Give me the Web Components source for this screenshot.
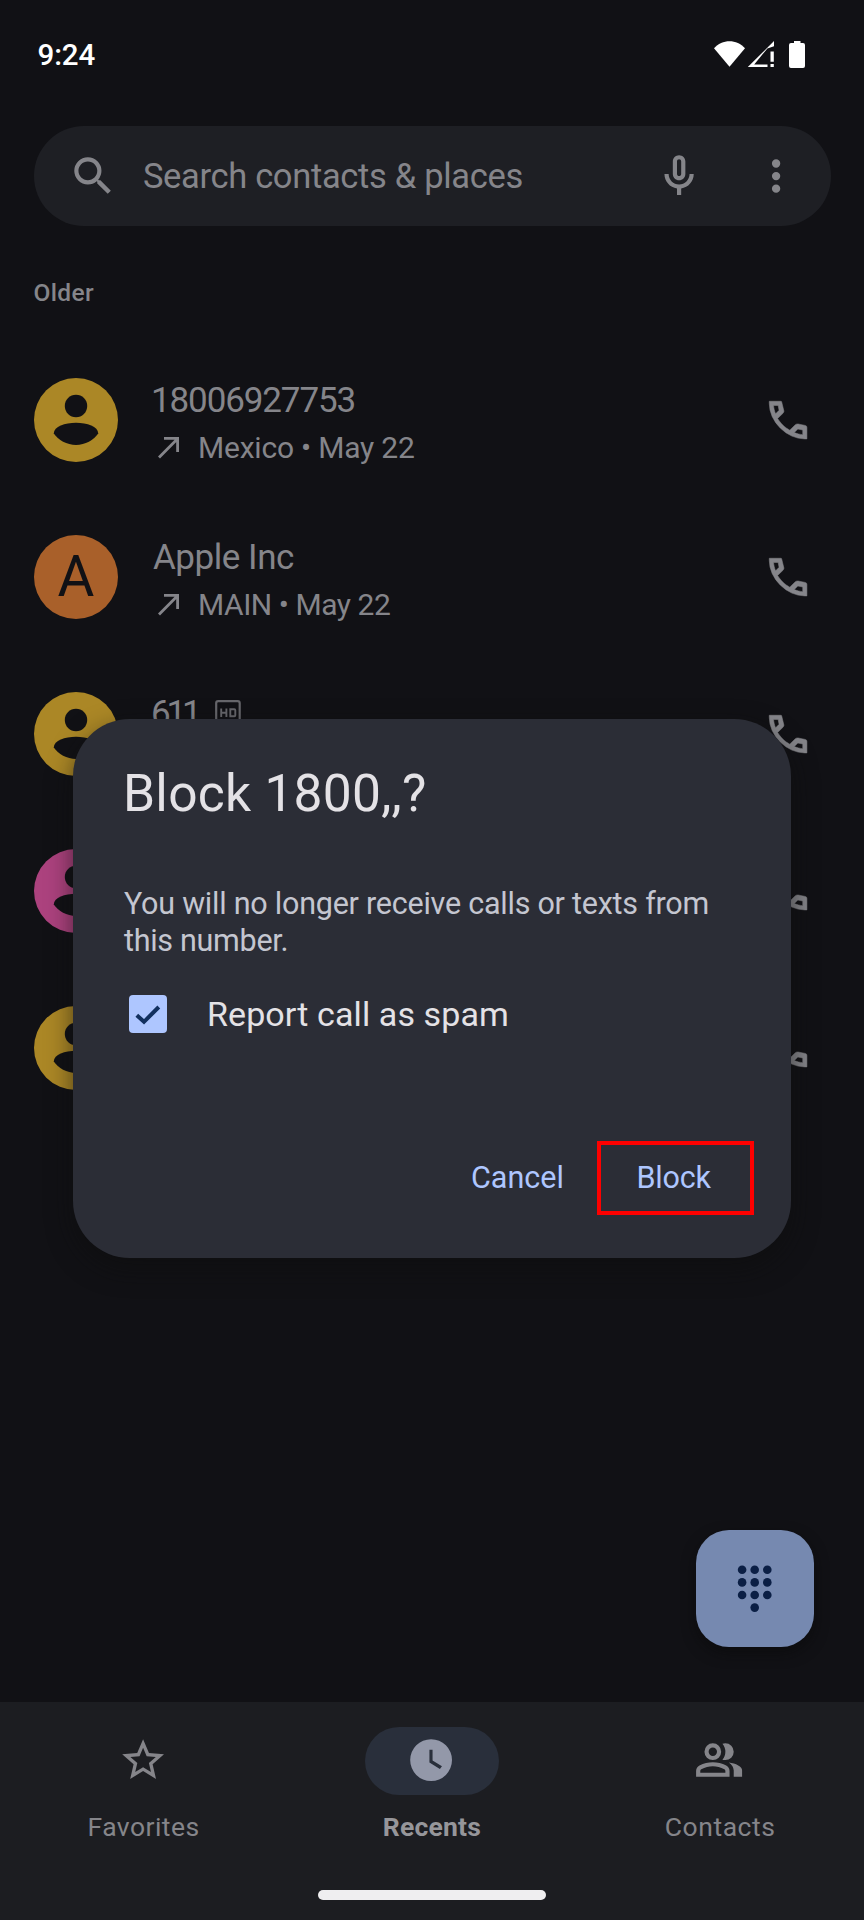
<!DOCTYPE html>
<html lang="en">
<head>
<meta charset="utf-8">
<title>Phone</title>
<style>
  html, body { margin: 0; background: #111115; }
  body { width: 864px; height: 1920px; overflow: hidden; font-family: Roboto, "Liberation Sans", sans-serif; }
</style>
</head>
<body>
<phone-screen></phone-screen>
<script>
const define = (name, html, setup) => {
  const tpl = document.createElement('template');
  tpl.innerHTML = html.trim();
  customElements.define(name, class extends HTMLElement {
    connectedCallback() {
      if (this.shadowRoot) return;
      this.attachShadow({ mode: 'open' }).appendChild(tpl.content.cloneNode(true));
      if (setup) setup.call(this, this.shadowRoot);
    }
  });
};

const ICONS = {
  search: 'M15.5 14h-.79l-.28-.27A6.47 6.47 0 0 0 16 9.5 6.5 6.5 0 1 0 9.5 16c1.61 0 3.09-.59 4.23-1.57l.27.28v.79l5 4.99L20.49 19l-4.99-5zm-6 0C7.01 14 5 11.99 5 9.5S7.01 5 9.5 5 14 7.01 14 9.5 11.99 14 9.5 14z',
  mic: 'M12 14c1.66 0 3-1.34 3-3V5c0-1.66-1.34-3-3-3S9 3.34 9 5v6c0 1.66 1.34 3 3 3zm-1-9c0-.55.45-1 1-1s1 .45 1 1v6c0 .55-.45 1-1 1s-1-.45-1-1V5zm6 6c0 2.76-2.24 5-5 5s-5-2.24-5-5H5c0 3.53 2.61 6.43 6 6.92V21h2v-3.08c3.39-.49 6-3.39 6-6.92h-2z',
  more: 'M12 8a2 2 0 1 0 0-4 2 2 0 0 0 0 4zm0 2a2 2 0 1 0 0 4 2 2 0 0 0 0-4zm0 6a2 2 0 1 0 0 4 2 2 0 0 0 0-4z',
  call: 'M19.95 21q-3.125 0-6.175-1.3625t-5.55-3.8625-3.8625-5.55T3 4.05V3H8.7q.25 0 .35.8l.95 3.9q.05.4-.45 1.05L6.975 11.2q.5.825 1.1875 1.6875t1.5125 1.6625q.775.775 1.625 1.3375t1.5 .9125l2.65-2.55q.5-.45 1.3-.4l3.45.7q.8.15.8.95V21ZM6.025 9l1.65-1.65L7.25 5H5.025q.125 1.025.35 2.025T6.025 9Zm8.95 8.95q.975.425 1.9875.675t2.0375.325v-2.2l-2.35-.475-1.675 1.675Z',
  star: 'M22 9.24l-7.19-.62L12 2 9.19 8.63 2 9.24l5.46 4.73L5.82 21 12 17.27 18.18 21l-1.63-7.03L22 9.24zM12 15.4l-3.76 2.27 1-4.28-3.32-2.88 4.38-.38L12 6.1l1.71 4.04 4.38.38-3.32 2.88 1 4.28L12 15.4z',
  clock: 'M12 2a10 10 0 1 0 0 20 10 10 0 0 0 0-20zm4.2 14.2L11.2 13.2V7h1.5v5.2l4.5 2.7-1 1.3z',
  group: 'M1 20v-2.8q0-.85.4375-1.5625T2.6 14.55q1.55-.775 3.15-1.1625T9 13t3.25.3875 3.15 1.1625q.725.375 1.1625 1.0875T17 17.2V20H1Zm18 0v-3q0-1.1-.6125-2.1125T16.65 13.15q1.275.15 2.4.5125T21.15 14.55q.9.5 1.375 1.1125T23 17v3h-4ZM9 12q-1.65 0-2.825-1.175T5 8t1.175-2.825T9 4t2.825 1.175T13 8t-1.175 2.825T9 12Zm10-4q0 1.65-1.175 2.825T15 12q-.275 0-.7-.0625T13.6 11.8q.675-.8 1.0375-1.775T15 8t-.3625-2.025T13.6 4.2q.35-.125.7-.1625T15 4q1.65 0 2.825 1.175T19 8ZM3 18h12v-.8q0-.275-.1375-.5T14.5 16.35q-1.35-.675-2.725-1.0125T9 15t-2.775.3375T3.5 16.35q-.225.125-.3625.35T3 17.2v.8Zm6-8q.825 0 1.4125-.5875T11 8t-.5875-1.4125T9 6t-1.4125.5875T7 8t.5875 1.4125T9 10Z'
};

define('ui-icon', `
  <style>:host{display:block;width:50.2px;height:50.2px;flex:none} svg{display:block;width:100%;height:100%;fill:currentColor;fill-rule:evenodd} :host([name=call]) svg{stroke:currentColor;stroke-width:.25}</style>
  <svg viewBox="0 0 24 24"><path/></svg>`,
  function (root) { root.querySelector('path').setAttribute('d', ICONS[this.getAttribute('name')]); });

/* One line of text, tracked so that its ink spans the width given in "ink". */
define('fit-text', `
  <style>:host{display:block;white-space:nowrap;flex:none} span{display:block}</style><span><slot></slot></span>`,
  function (root) {
    const text = this.textContent, size = +this.getAttribute('size');
    const weight = this.getAttribute('weight') || 400, ink = +this.getAttribute('ink');
    const ctx = document.createElement('canvas').getContext('2d');
    ctx.font = `${weight} ${size}px Roboto, "Liberation Sans", sans-serif`;
    const m = ctx.measureText(text);
    const natural = m.actualBoundingBoxLeft + m.actualBoundingBoxRight;
    const gaps = text.length - 1;
    this.style.cssText += `;font-size:${size}px;font-weight:${weight};width:${ink}px;`;
    const s = root.querySelector('span').style;
    s.marginLeft = m.actualBoundingBoxLeft + 'px';
    s.letterSpacing = (gaps ? (ink - natural) / gaps : 0).toFixed(3) + 'px';
  });

define('status-bar', `
  <style>
    :host{display:flex;align-items:flex-start;justify-content:space-between;height:125.5px;box-sizing:border-box;padding:35px 59px 0 38.5px;color:#fff;line-height:40px}
    .icons{display:flex;padding-top:6px} svg{display:block;fill:#fff}
  </style>
  <fit-text size="29.5" weight="500" ink="57">9:24</fit-text>
  <div class="icons">
    <svg width="91" height="27" viewBox="0 0 91 27">
      <path d="M0 7.3C8-2.2 23-2.2 31 7.3L15.5 25.8z"/>
      <path fill-rule="evenodd" d="M60 0v5.2l-6.6 2.2L40.2 23.6H53.5V26H33.8zM56.5 10.5h3.3v10.2h-3.3zM56.5 23h3.3v3h-3.3z"/>
      <path d="M80 0h6.5v2H89q2 0 2 2v21q0 2-2 2H77q-2 0-2-2V4q0-2 2-2h3z"/>
    </svg>
  </div>`);

define('search-bar', `
  <style>
    :host{display:flex;align-items:center;height:100.5px;margin:0 33.5px;padding:0 29px 0 34.2px;box-sizing:border-box;border-radius:50px;background:#1e1f24;color:#85858a;line-height:46px}
    fit-text{margin-left:26px} .mic{margin-left:auto;margin-right:47.5px}
  </style>
  <ui-icon name="search"></ui-icon>
  <fit-text size="34.5" ink="378.5">Search contacts &amp; places</fit-text>
  <ui-icon class="mic" name="mic"></ui-icon><ui-icon name="more"></ui-icon>`);

define('contact-avatar', `
  <style>
    :host{display:flex;width:84px;height:84px;border-radius:50%;background:var(--tone);color:#111115;align-items:center;justify-content:center;flex:none;line-height:84px}
    svg{display:block;fill:currentColor} :host([letter]) svg{display:none}
  </style>
  <svg width="84" height="84"><circle cx="42" cy="28" r="11.2"/><path d="M19.8 55.5C19.8 48.5 31 44.8 42 44.8S64.2 48.5 64.2 55.5C60 62 51 67 42 67S24 62 19.8 55.5z"/></svg><slot></slot>`);

define('call-row', `
  <style>
    :host{display:flex;align-items:center;height:156.95px;padding:0 50.5px 0 34px;box-sizing:border-box;color:#85858a}
    .text{margin-left:35px;flex:1;display:flex;flex-direction:column;padding-top:8px}
    .top{display:flex;height:47.5px;line-height:47px;gap:20px} .sub{display:flex;height:47px;line-height:47px;align-items:center}
    .sub svg{margin:0 21px 0 5px;flex:none}
  </style>
  <slot name="avatar"></slot>
  <div class="text"><div class="top"><slot name="name"></slot></div>
  <div class="sub"><svg width="21" height="23" fill="none" stroke="currentColor" stroke-width="2.8"><path d="M1 21.5 19.3 3M6 2.4H19.6V16"/></svg><slot name="detail"></slot></div></div>
  <ui-icon name="call"></ui-icon>`);

define('hd-badge', `
  <style>:host{display:block;margin-top:9.5px} svg{display:block}</style>
  <svg width="26" height="26" fill="none" stroke="#66666b" stroke-width="2.2"><rect x="1.2" y="1.2" width="23.5" height="23" rx="2"/><path d="M6.2 8.5V17M11.4 8.5V17M6.2 12.8H11.4M15.3 9.3H19.3Q20.3 9.3 20.3 10.3V15.2Q20.3 16.2 19.3 16.2H15.3z" stroke-width="1.9"/></svg>`);

define('recent-calls', `
  <style>:host{display:block;padding-top:53.5px} .older{padding-left:34.5px;height:61.9px;line-height:26px;color:#85858a}</style>
  <div class="older"><fit-text size="24.5" weight="500" ink="59.5">Older</fit-text></div>
  <call-row><contact-avatar slot="avatar" style="--tone:#ab8726"></contact-avatar>
    <fit-text slot="name" size="35" ink="201.5">18006927753</fit-text><fit-text slot="detail" size="30" ink="214">Mexico • May 22</fit-text></call-row>
  <call-row><contact-avatar letter slot="avatar" style="--tone:#a9602a"><fit-text size="56.5" ink="37">A</fit-text></contact-avatar>
    <fit-text slot="name" size="35" ink="141">Apple Inc</fit-text><fit-text slot="detail" size="30" ink="190">MAIN • May 22</fit-text></call-row>
  <call-row><contact-avatar slot="avatar" style="--tone:#ab8726"></contact-avatar>
    <fit-text slot="name" size="35" ink="42">611</fit-text><hd-badge slot="name"></hd-badge></call-row>
  <call-row><contact-avatar slot="avatar" style="--tone:#ac427e"></contact-avatar></call-row>
  <call-row><contact-avatar slot="avatar" style="--tone:#ab8726"></contact-avatar></call-row>`);

define('dial-fab', `
  <style>:host{display:block;width:117.5px;height:117.5px;border-radius:33px;background:#7689b0;box-shadow:0 6px 14px rgba(10,10,10,.55)} svg{display:block}</style>
  <svg width="117.5" height="117.5" fill="#0b1f45"></svg>`,
  function (root) {
    const dots = [];
    for (const y of [39.8, 52.4, 65]) for (const x of [46.1, 58.7, 71.3]) dots.push([x, y]);
    dots.push([58.7, 77.6]);
    root.querySelector('svg').innerHTML = dots.map(([x, y]) => `<circle cx="${x}" cy="${y}" r="4.3"/>`).join('');
  });

define('nav-tab', `
  <style>
    :host{display:flex;flex-direction:column;align-items:center;color:#85858a;line-height:34px;padding-top:25.5px}
    .pill{width:134.5px;height:67.5px;border-radius:34px;display:flex;align-items:center;justify-content:center;margin-bottom:15.5px}
    :host([active]) .pill{background:#292f3b;color:#9398a9} :host([active]){color:#96969a}
    ::slotted(ui-icon){margin:-1px 1px 0 0}
  </style>
  <div class="pill"><slot name="icon"></slot></div><slot></slot>`);

define('bottom-nav', `
  <style>
    :host{display:flex;flex-direction:column;align-items:center;height:218.5px;background:#1c1d21}
    .tabs{display:grid;grid-template-columns:repeat(3,1fr);width:864px;height:188.5px}
    .home{width:228px;height:9.5px;border-radius:5px;background:#efeef0}
  </style>
  <div class="tabs">
    <nav-tab><ui-icon slot="icon" name="star"></ui-icon><fit-text size="26.5" ink="109">Favorites</fit-text></nav-tab>
    <nav-tab active><ui-icon slot="icon" name="clock"></ui-icon><fit-text size="26.5" weight="700" ink="96.5">Recents</fit-text></nav-tab>
    <nav-tab><ui-icon slot="icon" name="group"></ui-icon><fit-text size="26.5" ink="108.5">Contacts</fit-text></nav-tab>
  </div>
  <div class="home"></div>`);

define('check-box', `
  <style>:host{display:block;width:38px;height:38px;border-radius:4px;background:#aec6ff} svg{display:block}</style>
  <svg width="38" height="38" fill="none" stroke="#12305f" stroke-width="4"><path d="M7.8 20.2 15 26.8 29.8 12"/></svg>`);

define('block-dialog', `
  <style>
    :host{display:flex;flex-direction:column;box-sizing:border-box;width:718px;height:539px;border-radius:57px;background:#2b2d36;box-shadow:0 10px 26px rgba(14,14,14,.6);padding:38.5px 37px 43px 51px;color:#e4e2e6}
    .title{line-height:72px;margin-left:3px;height:127px}
    .body{line-height:37.6px;color:#c4c6d0;height:93px}
    .check{display:flex;align-items:center;gap:42px;padding-left:5px;line-height:38px;height:38px;margin-top:17.5px}
    .actions{display:flex;margin-top:auto;justify-content:flex-end;align-items:center;color:#aec6ff;line-height:74px;gap:34.5px}
    .hot{box-sizing:border-box;width:157px;height:74px;border:4px solid #fe0000;line-height:66px;padding-left:37.5px}
  </style>
  <div class="title"><fit-text size="51.5" ink="298">Block 1800,,?</fit-text></div>
  <div class="body"><fit-text size="30.5" ink="583.5">You will no longer receive calls or texts from</fit-text><fit-text size="30.5" ink="162.5">this number.</fit-text></div>
  <div class="check"><check-box></check-box><fit-text size="34" ink="298">Report call as spam</fit-text></div>
  <div class="actions"><fit-text size="30.5" ink="90.5">Cancel</fit-text><div class="hot"><fit-text size="30.5" ink="73">Block</fit-text></div></div>`);

define('phone-screen', `
  <style>
    :host{display:flex;flex-direction:column;position:relative;width:864px;height:1920px;background:#111115;overflow:hidden}
    recent-calls{flex:1}
    dial-fab{position:absolute;left:696px;top:1529.5px}
    block-dialog{position:absolute;left:73px;top:719px}
  </style>
  <status-bar></status-bar><search-bar></search-bar><recent-calls></recent-calls><bottom-nav></bottom-nav>
  <dial-fab></dial-fab><block-dialog></block-dialog>`);
</script>
</body>
</html>
